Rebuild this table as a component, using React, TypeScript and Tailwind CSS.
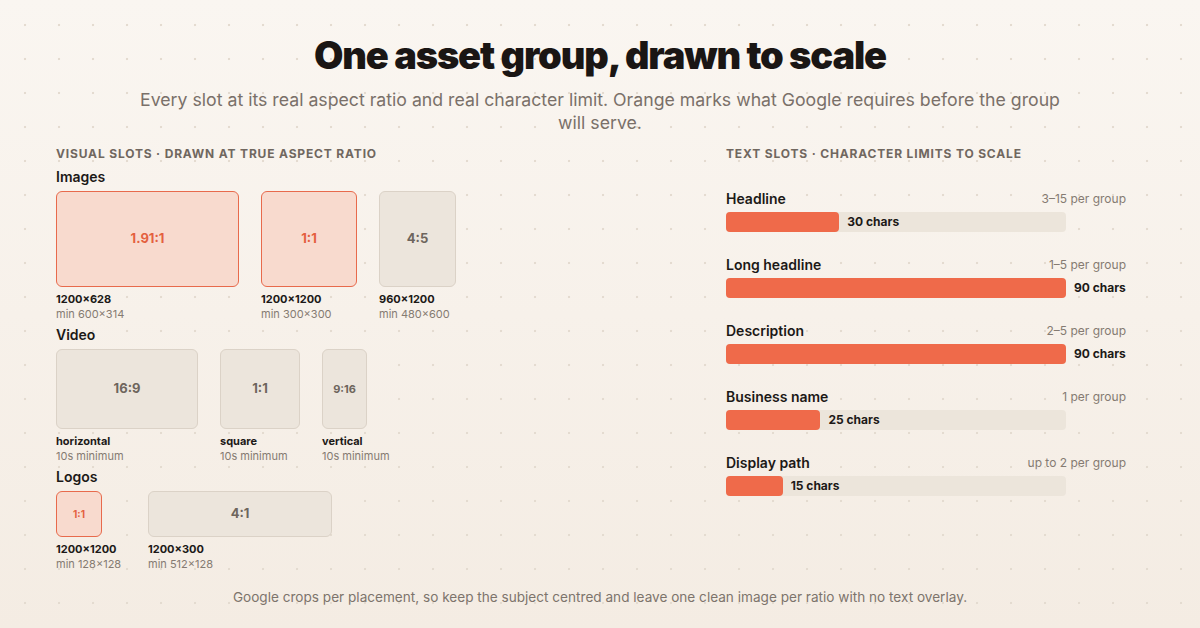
import clsx from 'clsx';

type Slot = {
  w: number;
  h: number;
  ratio: string;
  req: boolean;
  size: string;
  top: string;
  sub: string;
};

const groups: { label: string; slots: Slot[] }[] = [
  {
    label: 'Images',
    slots: [
      { w: 183, h: 96, ratio: '1.91:1', req: true, size: 'text-[13px]', top: '1200×628', sub: 'min 600×314' },
      { w: 96, h: 96, ratio: '1:1', req: true, size: 'text-[13px]', top: '1200×1200', sub: 'min 300×300' },
      { w: 77, h: 96, ratio: '4:5', req: false, size: 'text-[13px]', top: '960×1200', sub: 'min 480×600' },
    ],
  },
  {
    label: 'Video',
    slots: [
      { w: 142, h: 80, ratio: '16:9', req: false, size: 'text-[13px]', top: 'horizontal', sub: '10s minimum' },
      { w: 80, h: 80, ratio: '1:1', req: false, size: 'text-[13px]', top: 'square', sub: '10s minimum' },
      { w: 45, h: 80, ratio: '9:16', req: false, size: 'text-[11px]', top: 'vertical', sub: '10s minimum' },
    ],
  },
  {
    label: 'Logos',
    slots: [
      { w: 46, h: 46, ratio: '1:1', req: true, size: 'text-[10px]', top: '1200×1200', sub: 'min 128×128' },
      { w: 184, h: 46, ratio: '4:1', req: false, size: 'text-[13px]', top: '1200×300', sub: 'min 512×128' },
    ],
  },
];

const textSlots = [
  { label: 'Headline', count: '3–15 per group', chars: 30 },
  { label: 'Long headline', count: '1–5 per group', chars: 90 },
  { label: 'Description', count: '2–5 per group', chars: 90 },
  { label: 'Business name', count: '1 per group', chars: 25 },
  { label: 'Display path', count: 'up to 2 per group', chars: 15 },
];

const TRACK = 340;
const MAX_CHARS = 90;

function SlotBox({ slot }: { slot: Slot }) {
  return (
    <div className="flex min-w-[70px] flex-col">
      <div
        className={clsx(
          'flex items-center justify-center rounded-md border font-bold',
          slot.size,
          slot.req
            ? 'border-[#e86a4c] bg-[#f8dace] text-[#e4603f]'
            : 'border-[#dbd2c7] bg-[#ece5dc] text-[#6e655d]',
        )}
        style={{ width: slot.w, height: slot.h }}
      >
        {slot.ratio}
      </div>
      <p className="mt-[5px] whitespace-nowrap text-[11px] leading-[15px] font-bold text-[#1c1917]">
        {slot.top}
      </p>
      <p className="whitespace-nowrap text-[11px] leading-[15px] text-[#857b72]">
        {slot.sub}
      </p>
    </div>
  );
}

export default function App() {
  return (
    <div className="flex h-[628px] w-[1200px] flex-col overflow-hidden bg-[radial-gradient(circle,#e4dbd0_1px,transparent_1.6px),linear-gradient(180deg,#faf6f1,#f4ece3)] [background-position:8px_8px,0_0] [background-size:34px_34px,100%_100%] font-['Inter',sans-serif]">
      <h1 className="pt-8 text-center text-[38px] leading-[46px] font-black tracking-[-0.03em] text-[#1a1614]">
        One asset group, drawn to scale
      </h1>
      <p className="mx-auto mt-[10px] max-w-[930px] text-center text-[17.7px] leading-[23px] text-[#7a7069]">
        Every slot at its real aspect ratio and real character limit. Orange
        marks what Google requires before the group will serve.
      </p>

      <div className="mt-[12px] flex pl-14 pr-[74px]">
        <section className="flex-1">
          <h2 className="text-[12px] leading-4 font-bold tracking-[0.07em] text-[#70675f] uppercase">
            Visual slots · drawn at true aspect ratio
          </h2>
          {groups.map((g, i) => (
            <div key={g.label} className={i === 0 ? 'mt-[5px]' : 'mt-[3px]'}>
              <h3 className="text-[14px] leading-5 font-semibold text-[#1c1917]">
                {g.label}
              </h3>
              <div className="mt-1 flex gap-[22px]">
                {g.slots.map((s) => (
                  <SlotBox key={s.top + s.ratio} slot={s} />
                ))}
              </div>
            </div>
          ))}
        </section>

        <section className="w-[400px]">
          <h2 className="text-[12px] leading-4 font-bold tracking-[0.07em] text-[#70675f] uppercase">
            Text slots · character limits to scale
          </h2>
          <div className="mt-[27px] flex flex-col gap-[23px]">
            {textSlots.map((t) => (
              <div key={t.label}>
                <div className="flex items-center justify-between">
                  <span className="text-[14px] leading-5 font-semibold text-[#1c1917]">
                    {t.label}
                  </span>
                  <span className="text-[12px] leading-5 text-[#857b72]">
                    {t.count}
                  </span>
                </div>
                <div className="mt-[3px] flex h-5 w-[340px] items-center rounded bg-[#ece5db]">
                  <div
                    className="h-full shrink-0 rounded bg-[#ef6a4a]"
                    style={{ width: (t.chars / MAX_CHARS) * TRACK }}
                  />
                  <span className="ml-2 text-[12px] font-bold whitespace-nowrap text-[#1c1917]">
                    {t.chars} chars
                  </span>
                </div>
              </div>
            ))}
          </div>
        </section>
      </div>

      <p className="mt-[15px] text-center text-[13.6px] leading-5 text-[#7d746c]">
        Google crops per placement, so keep the subject centred and leave one
        clean image per ratio with no text overlay.
      </p>
    </div>
  );
}
